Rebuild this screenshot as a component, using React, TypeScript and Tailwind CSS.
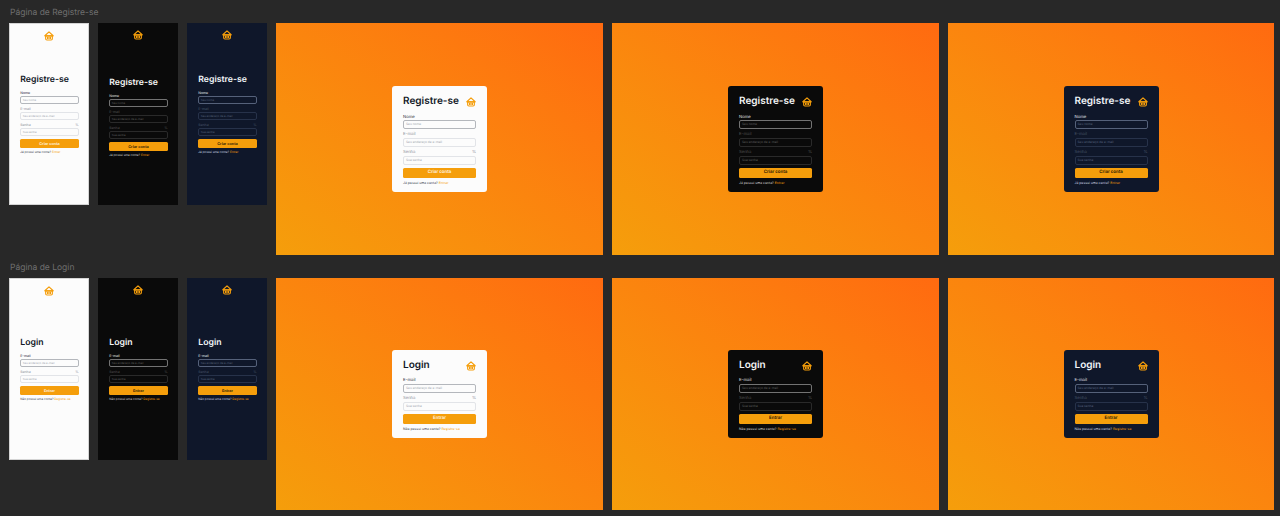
import React from 'react';

const font = { fontFamily: 'Inter, "Liberation Sans", sans-serif' };

type Theme = 'light' | 'dark' | 'navy';

const themes = {
  light: {
    phone: 'bg-[#fcfcfc] border border-[#d4d4d4]',
    card: 'bg-[#fcfcfc]',
    title: 'text-[#111827]',
    label: 'text-[#1f2937]',
    muted: 'text-[#8a8f98]',
    focus: 'border-[#b4b7bc] bg-[#fcfcfc]',
    input: 'border-[#e2e4e8] bg-[#fcfcfc]',
    holder: 'text-[#a3a8b0]',
    foot: 'text-[#374151]',
    btnText: 'text-[#fff7e6]',
  },
  dark: {
    phone: 'bg-[#0a0a0a]',
    card: 'bg-[#0a0a0a]',
    title: 'text-[#f5f5f5]',
    label: 'text-[#e5e5e5]',
    muted: 'text-[#525252]',
    focus: 'border-[#737373] bg-[#0a0a0a]',
    input: 'border-[#2a2a2a] bg-[#0a0a0a]',
    holder: 'text-[#5c5c5c]',
    foot: 'text-[#d4d4d4]',
    btnText: 'text-[#1a1204]',
  },
  navy: {
    phone: 'bg-[#0f172a]',
    card: 'bg-[#0f172a]',
    title: 'text-[#f1f5f9]',
    label: 'text-[#e2e8f0]',
    muted: 'text-[#475569]',
    focus: 'border-[#55617a] bg-[#0f172a]',
    input: 'border-[#27324a] bg-[#0f172a]',
    holder: 'text-[#55617a]',
    foot: 'text-[#cbd5e1]',
    btnText: 'text-[#1a1204]',
  },
};

const BasketIcon = ({ className }: { className: string }) => (
  <svg viewBox="0 0 24 24" fill="none" stroke="#f59e0b" strokeWidth="2.8" strokeLinejoin="round" strokeLinecap="round" className={className}>
    <path d="M12 2 L22 11.5 H2 Z" />
    <path d="M4 11.5 H20 V18.5 a3 3 0 0 1 -3 3 H7 a3 3 0 0 1 -3 -3 Z" />
    <path d="M8.5 15 V18 M12 15 V18 M15.5 15 V18" />
  </svg>
);

type Field = { label: string; holder: string; eye?: boolean; focus?: boolean };

const registerFields: Field[] = [
  { label: 'Nome', holder: 'Seu nome', focus: true },
  { label: 'E-mail', holder: 'Seu endereço de e-mail' },
  { label: 'Senha', holder: 'Sua senha', eye: true },
];

const loginFields: Field[] = [
  { label: 'E-mail', holder: 'Seu endereço de e-mail', focus: true },
  { label: 'Senha', holder: 'Sua senha', eye: true },
];

const copy = {
  register: { title: 'Registre-se', button: 'Criar conta', foot: 'Já possui uma conta?', link: 'Entrar', fields: registerFields },
  login: { title: 'Login', button: 'Entrar', foot: 'Não possui uma conta?', link: 'Registre-se', fields: loginFields },
};

// small form used in the phone frames
const PhoneForm = ({ page, theme }: { page: 'register' | 'login'; theme: Theme }) => {
  const t = themes[theme];
  const c = copy[page];
  return (
    <div className="w-[58.5px] flex flex-col">
      <div className={`text-[8.7px] leading-[11px] font-semibold mb-[5px] ${t.title}`}>{c.title}</div>
      {c.fields.map((f) => (
        <div key={f.label} className="mb-[3px]">
          <div className={`flex justify-between text-[3.5px] leading-[5px] mb-[0.5px] ${f.focus ? t.label : t.muted}`}>
            <span>{f.label}</span>
            {f.eye && <span>%</span>}
          </div>
          <div className={`h-[7.5px] border rounded-[2px] pl-[1.5px] flex items-center text-[2.8px] ${f.focus ? t.focus : t.input} ${t.holder}`}>
            {f.holder}
          </div>
        </div>
      ))}
      <div className={`h-[9.5px] bg-[#f59e0b] rounded-[1.5px] flex items-center justify-center text-[3.8px] font-semibold ${t.btnText}`}>
        {c.button}
      </div>
      <div className={`text-[3px] leading-[5px] mt-[2px] ${t.foot}`}>
        {c.foot} <span className="text-[#f59e0b]">{c.link}</span>
      </div>
    </div>
  );
};

const Phone = ({ page, theme, shift }: { page: 'register' | 'login'; theme: Theme; shift?: boolean }) => (
  <div className={`w-[80px] h-[182px] shrink-0 flex flex-col items-center ${themes[theme].phone}`}>
    <BasketIcon className="w-[10px] h-[10px] mt-[7px] shrink-0" />
    <div className={`flex-1 flex items-center pl-[1px] ${shift ? 'pt-[6px]' : ''} pb-[15px]`}>
      <PhoneForm page={page} theme={theme} />
    </div>
  </div>
);

const Desktop = ({ page, theme, width }: { page: 'register' | 'login'; theme: Theme; width: string }) => {
  const t = themes[theme];
  const c = copy[page];
  return (
    <div className={`${width} h-[232px] shrink-0 flex items-center justify-center bg-gradient-to-tr from-[#f59e0b] to-[#ff6a10]`}>
      <div className={`w-[95px] rounded-[3px] px-[11px] pt-[9px] pb-[5.5px] ${t.card}`}>
        <div className="flex items-center justify-between mb-[6.25px]">
          <span className={`text-[10px] leading-[13px] font-semibold ${t.title}`}>{c.title}</span>
          <BasketIcon className="w-[10px] h-[10px]" />
        </div>
        {c.fields.map((f) => (
          <div key={f.label} className="mb-[3.25px]">
            <div className={`flex justify-between text-[4.2px] leading-[5.5px] mb-[0.25px] ${f.focus ? t.label : t.muted}`}>
              <span>{f.label}</span>
              {f.eye && <span>%</span>}
            </div>
            <div className={`h-[8.75px] border rounded-[2px] pl-[2px] flex items-center text-[3.2px] ${f.focus ? t.focus : t.input} ${t.holder}`}>
              {f.holder}
            </div>
          </div>
        ))}
        <div className={`h-[10px] pt-[1px] bg-[#f59e0b] rounded-[1.5px] flex items-center justify-center text-[4.4px] leading-none font-semibold ${t.btnText}`}>
          {c.button}
        </div>
        <div className={`text-[3.4px] leading-[5px] mt-[3.5px] ${t.foot}`}>
          {c.foot} <span className="text-[#f59e0b]">{c.link}</span>
        </div>
      </div>
    </div>
  );
};

const Section = ({ title, page }: { title: string; page: 'register' | 'login' }) => (
  <section>
    <div className="h-[23px] pt-[6.5px] pl-[10px] text-[8.5px] leading-[13px] text-[#6f6f6f]">{title}</div>
    <div className="flex gap-[9px] pl-[9px]">
      <Phone page={page} theme="light" />
      <Phone page={page} theme="dark" shift={page === 'register'} />
      <Phone page={page} theme="navy" />
      <Desktop page={page} theme="light" width="w-[327px]" />
      <Desktop page={page} theme="dark" width="w-[327px]" />
      <Desktop page={page} theme="navy" width="w-[326px]" />
    </div>
  </section>
);

export default function App() {
  return (
    <div className="w-[1280px] h-[516px] overflow-hidden bg-[#282828] flex flex-col [text-rendering:geometricPrecision]" style={font}>
      <Section title="Página de Registre-se" page="register" />
      <Section title="Página de Login" page="login" />
    </div>
  );
}
